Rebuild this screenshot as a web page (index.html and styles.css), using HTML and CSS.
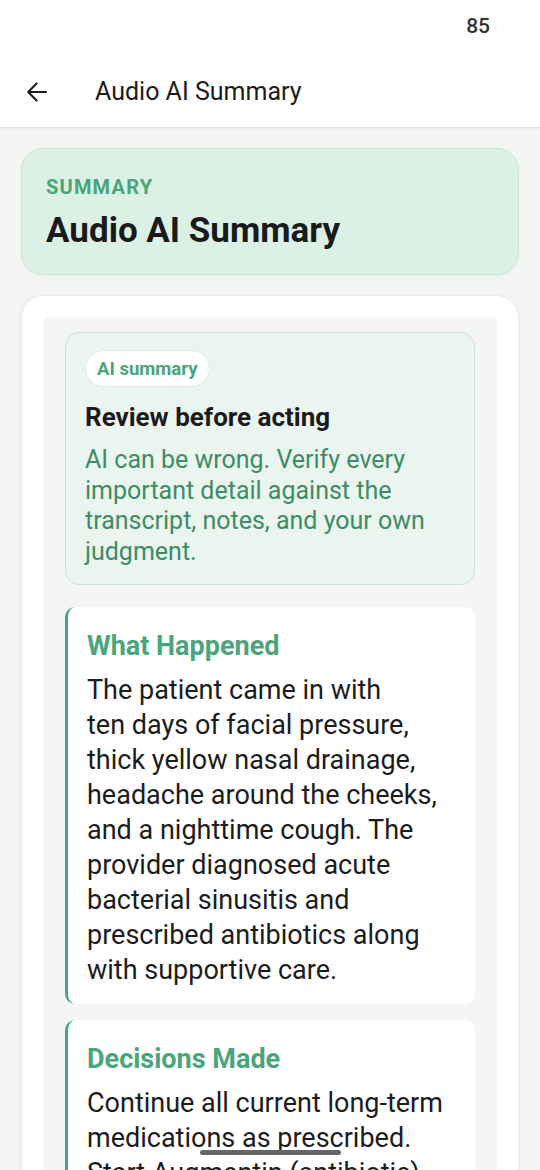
FILE: index.html
```html
<!DOCTYPE html>
<html lang="en">
<head>
  <meta charset="UTF-8">
  <meta name="viewport" content="width=device-width, initial-scale=1.0">
  <title>Audio AI Summary</title>
  <link rel="stylesheet" href="styles.css">
</head>
<body>
  <!-- Status bar -->
  <div class="status-bar">
    <span class="status-num">85</span>
  </div>
  <!-- Top app bar -->
  <header class="app-bar">
    <button class="back-button" aria-label="Back">
      <svg width="24" height="24" viewBox="0 0 24 24" aria-hidden="true">
        <path d="M21 12H3.6M11.6 3.6L3.2 12l8.4 8.4" fill="none" stroke="#1c1c1c" stroke-width="2.1" stroke-linecap="round" stroke-linejoin="round"/>
      </svg>
    </button>
    <h1 class="app-title">Audio AI Summary</h1>
  </header>
  <main class="screen">
    <section class="hero-card">
      <div class="eyebrow">SUMMARY</div>
      <h2 class="hero-title">Audio AI Summary</h2>
    </section>
    <section class="summary-card">
      <div class="summary-body">
        <div class="notice">
          <span class="chip">AI summary</span>
          <h3 class="notice-title">Review before acting</h3>
          <p class="notice-text">AI can be wrong. Verify every important detail against the transcript, notes, and your own judgment.</p>
        </div>
        <article class="block">
          <h3 class="block-title">What Happened</h3>
          <p class="block-text">The patient came in with
ten days of facial pressure, thick yellow nasal drainage, headache around the cheeks, and a nighttime cough. The provider diagnosed acute bacterial sinusitis and prescribed antibiotics along with supportive care.</p>
        </article>
        <article class="block">
          <h3 class="block-title">Decisions Made</h3>
          <p class="block-text">Continue all current long-term medications as prescribed. Start Augmentin (antibiotic) twice daily for ten days.</p>
        </article>
      </div>
    </section>
  </main>
  <!-- Gesture navigation handle -->
  <div class="nav-handle"></div>
</body>
</html>
```

FILE: styles.css
```css
* {
  box-sizing: border-box;
}
body {
  margin: 0;
  width: 540px;
  height: 1170px;
  overflow: hidden;
  font-family: Roboto, 'Noto Sans', sans-serif;
  background-color: #f4f6f4;
  color: #1c1c1c;
  position: relative;
}
.status-bar {
  height: 56px;
  background-color: #ffffff;
  display: flex;
  justify-content: flex-end;
  align-items: center;
  padding: 0 50px 4px 0;
}
.status-num {
  font-size: 21px;
  font-weight: 500;
  color: #333333;
}
.app-bar {
  height: 72px;
  background-color: #ffffff;
  display: flex;
  align-items: center;
  padding: 0 0 0 25px;
  border-bottom: 1px solid #e2e4e2;
  box-shadow: 0 1px 3px rgba(0, 0, 0, 0.06);
}
.back-button {
  width: 24px;
  height: 24px;
  padding: 0;
  border: none;
  background: none;
  display: flex;
}
.app-title {
  margin: 0 0 0 46px;
  font-size: 25px;
  font-weight: 400;
  color: #1c1c1c;
}
.screen {
  padding: 20px 21px 0;
  display: flex;
  flex-direction: column;
  gap: 20px;
}
.hero-card {
  background-color: #dcf1e6;
  border: 1px solid #c9e6d6;
  border-radius: 22px;
  padding: 26px 24px 23px;
  box-shadow: 0 1px 3px rgba(0, 0, 0, 0.05);
}
.eyebrow {
  font-size: 20px;
  line-height: 24px;
  font-weight: 700;
  letter-spacing: 1.2px;
  color: #4aa57a;
}
.hero-title {
  margin: 12px 0 0;
  font-size: 35px;
  line-height: 40px;
  font-weight: 700;
  color: #1a1a1a;
}
.summary-card {
  background-color: #ffffff;
  border: 1px solid #e9ece9;
  border-radius: 22px;
  padding: 21px 21px 0;
  box-shadow: 0 1px 4px rgba(0, 0, 0, 0.06);
}
.summary-body {
  background-color: #f3f6f3;
  padding: 15px 22px 0;
  display: flex;
  flex-direction: column;
  gap: 16px;
}
.notice {
  background-color: #eaf5ef;
  border: 1px solid #c9e4d5;
  border-radius: 14px;
  padding: 17px 19px 16px;
  margin-bottom: 6px;
}
.chip {
  display: inline-block;
  background-color: #ffffff;
  border: 1px solid #dcebe2;
  border-radius: 20px;
  padding: 8px 11px 6px;
  font-size: 18.5px;
  line-height: 21px;
  font-weight: 700;
  color: #4aa57a;
}
.notice-title {
  margin: 15px 0 0;
  font-size: 26px;
  line-height: 30px;
  font-weight: 700;
  color: #1a1a1a;
}
.notice-text {
  margin: 13px 0 0;
  font-size: 25px;
  line-height: 30.7px;
  color: #3d8c66;
}
.block {
  background-color: #ffffff;
  border-left: 3px solid #4aa57a;
  border-radius: 10px;
  padding: 23px 22px 16px 19px;
}
.block-title {
  margin: 0;
  font-size: 27px;
  line-height: 32px;
  font-weight: 700;
  color: #4aa57a;
}
.block-text {
  margin: 11px 0 0;
  font-size: 27px;
  line-height: 35px;
  color: #1c1c1c;
  white-space: pre-line;
}
.nav-handle {
  position: absolute;
  left: 200px;
  bottom: 15px;
  width: 141px;
  height: 5px;
  border-radius: 3px;
  background-color: #666666;
}
```
